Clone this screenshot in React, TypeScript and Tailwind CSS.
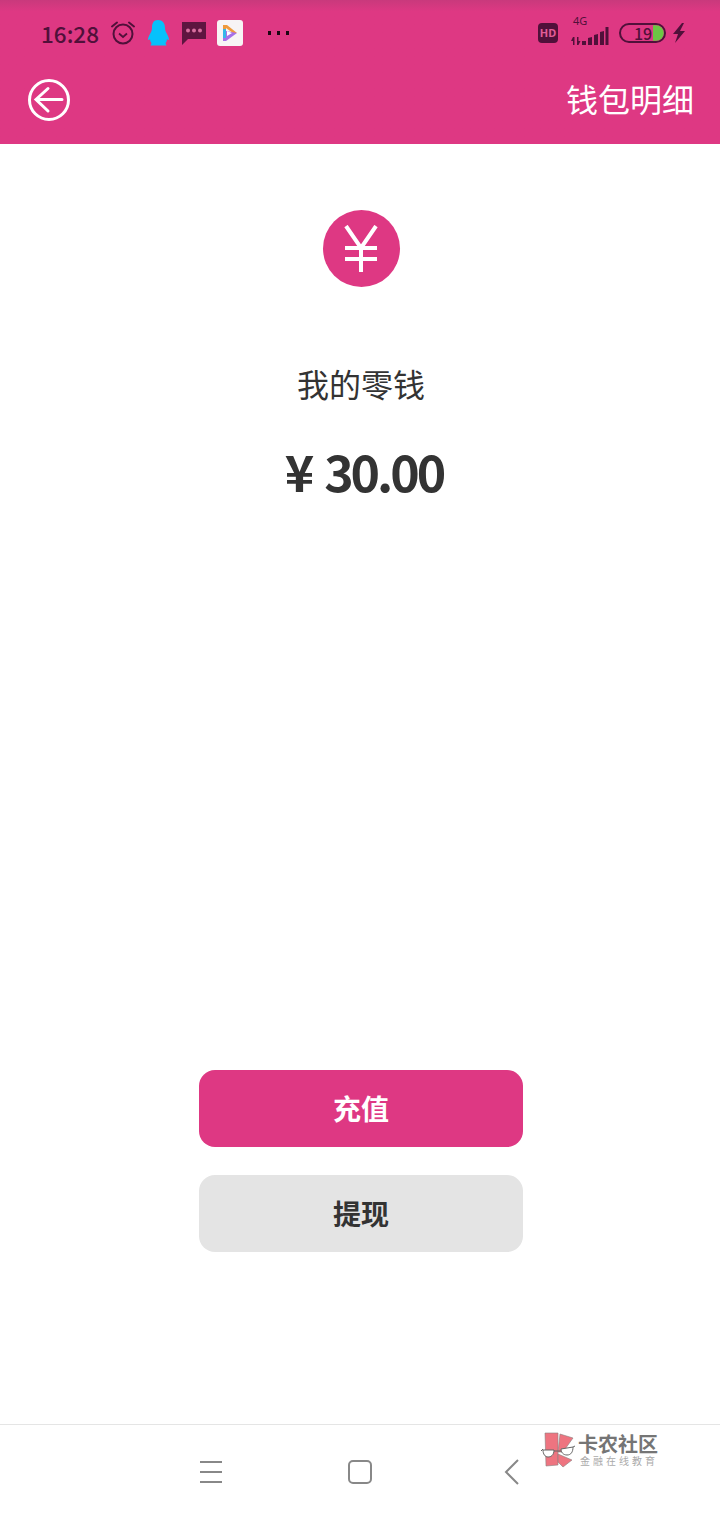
const font = { fontFamily: '"Noto Sans CJK SC", "Noto Sans", sans-serif' };

function Alarm() {
  return (
    <svg width="26" height="26" viewBox="0 0 26 26" fill="none" stroke="#50103a" strokeWidth="2">
      <circle cx="13" cy="14" r="9.500" />
      <path d="M9 13.500l4 3.500 4-3.500" strokeWidth="1.800" />
      <path d="M2 6.500L7 2.500M24 6.500L19 2.500" strokeLinecap="round" />
    </svg>
  );
}
function Penguin() {
  return (
    <svg width="24" height="26" viewBox="0 0 24 26" fill="#07c1fb">
      <path d="M12 0c4.600 0 7 3.500 7 8 0 2 .5 3 1.500 5 1.500 3 2.500 5 2.500 6.500 0 1-1 .5-2-.5 0 1.500-.5 3-1.500 4l1 2.500H4.500l1-2.500c-1-1-1.500-2.500-1.500-4-1 1-2 1.500-2 .5C2 18 3 16 4.500 13c1-2 1.500-3 1.500-5 0-4.500 1.400-8 6-8z" />
    </svg>
  );
}
function Msg() {
  return (
    <svg width="25" height="25" viewBox="0 0 25 25">
      <path d="M1 1h24v17H7l-6 6z" fill="#5e1540" />
      <circle cx="7" cy="9.500" r="2" fill="#d7709f" />
      <circle cx="13" cy="9.500" r="2" fill="#d7709f" />
      <circle cx="19" cy="9.500" r="2" fill="#d7709f" />
    </svg>
  );
}
function Play() {
  return (
    <div className="w-[26px] h-[26px] rounded-[3px] bg-[#f7f4f5] flex items-center justify-center">
      <svg width="20" height="20" viewBox="0 0 20 20" fill="none">
        <path d="M3 2h4l10 8-4 0L6 5v2H3z" fill="#ef9a3d" />
        <path d="M6 8l11 2-11 8H3l0-4 3 0z" fill="#a66fe8" />
        <path d="M3 6h3v9H3z" fill="#35b6e9" />
        <path d="M7 8l5 2-5 3z" fill="#ffffff" />
      </svg>
    </div>
  );
}
function Signal() {
  return (
    <div className="relative w-[38px] h-[26px]">
      <span className="absolute left-[2px] top-[-5px] text-[11px] leading-[12px] text-[#50103a]" style={{ fontFamily: '"Noto Sans", sans-serif' }}>4G</span>
      <svg className="absolute left-0 bottom-0" width="38" height="20" viewBox="0 0 38 20" fill="#50103a">
        <path d="M2 11h1.500v8H2zM0 15l2-4v4zM6 11h1.500v8H6zM7.500 19v-4l2 0z" />
        <rect x="11" y="15" width="4" height="4" />
        <path d="M17 12l4-1v8h-4zM23 9l4-1v11h-4zM29 6l4-1v14h-4zM34.500 1H37.500V19H34.500z" />
      </svg>
    </div>
  );
}
function Battery() {
  return (
    <div className="relative w-[47px] h-[20px] rounded-[10px] border-2 border-[#50103a] flex items-center">
      <span className="ml-[13px] text-[16px] leading-[18px] font-medium text-[#50103a]" style={{ fontFamily: '"Noto Sans CJK SC", sans-serif' }}>19</span>
      <svg className="ml-[1px]" width="11" height="16" viewBox="0 0 11 16">
        <path d="M0 0h3a8 8 0 0 1 0 16H0z" fill="#6cc644" />
      </svg>
    </div>
  );
}

export default function App() {
  return (
    <div className="w-[720px] h-[1520px] bg-white flex flex-col overflow-hidden relative" style={font}>
      <header className="h-[144px] bg-gradient-to-b from-[#c9397c] from-0% to-[#de3883] to-[8%] flex flex-col">
        <div className="h-[66px] flex items-center pl-[41px] pr-[33px]">
          <span className="text-[22.500px] leading-none text-[#50103a] w-[58px] font-medium whitespace-nowrap" style={{ fontFamily: '"Noto Sans CJK SC", sans-serif' }}>16:28</span>
          <div className="ml-[11px]"><Alarm /></div>
          <div className="ml-[10px]"><Penguin /></div>
          <div className="ml-[11px]"><Msg /></div>
          <div className="ml-[11px]"><Play /></div>
          <div className="ml-[25px] flex gap-[6px]">
            <span className="w-[3px] h-[4px] bg-[#1b0612]" />
            <span className="w-[3px] h-[4px] bg-[#1b0612]" />
            <span className="w-[3px] h-[4px] bg-[#1b0612]" />
          </div>
          <div className="flex-1" />
          <div className="w-[20px] h-[20px] rounded-[4px] bg-[#50103a] flex items-center justify-center text-[11px] font-bold text-[#e05d97]" style={{ fontFamily: '"Noto Sans", sans-serif' }}>HD</div>
          <div className="ml-[13px]"><Signal /></div>
          <div className="ml-[10px]"><Battery /></div>
          <svg className="ml-[6px]" width="15" height="20" viewBox="0 0 15 20" fill="#50103a">
            <path d="M10 0L1 11h5l-3 9 10-12H8l4-8z" />
          </svg>
        </div>
        <div className="flex-1 flex items-center justify-between pl-[28px] pr-[26px] pb-[11px]">
          <svg width="42" height="42" viewBox="0 0 42 42" fill="none" stroke="#ffffff" strokeWidth="3" strokeLinecap="round">
            <circle cx="21" cy="21" r="19.500" />
            <path d="M34 20.500H9M20 9.500L8 20.500 20 32" />
          </svg>
          <span className="text-[32px] leading-none text-white mt-[-3px]">钱包明细</span>
        </div>
      </header>

      <main className="flex-1 flex flex-col items-center relative pl-[2px]">
        <div className="mt-[66px] w-[77px] h-[77px] rounded-full bg-[#de3883] flex items-center justify-center">
          <svg width="36" height="48" viewBox="0 0 36 48" fill="none" stroke="#ffffff" strokeWidth="4">
            <path d="M3 1L18 23 33 1M18 23V47M2 23H34M2 34H34" />
          </svg>
        </div>
        <div className="mt-[76px] text-[32px] leading-[40px] text-[#333333]">我的零钱</div>
        <div className="mt-[35px] ml-[6px] text-[50px] leading-[64px] font-bold tracking-[-3px] text-[#333333] flex items-center" style={{ fontFamily: '"Noto Sans CJK SC", sans-serif' }}>
          <span className="mr-[10px] tracking-normal text-[50px]">¥</span>30.00
        </div>
        <div className="flex-1" />
        <button className="w-[324px] h-[77px] rounded-[16px] bg-[#de3883] text-white text-[28px] font-bold pb-[2px]">充值</button>
        <button className="mt-[28px] mb-[172px] w-[324px] h-[77px] rounded-[16px] bg-[#e4e4e4] text-[#333333] text-[28px] font-bold pb-[2px]">提现</button>
      </main>

      <nav className="h-[96px] border-t border-[#e5e5e5] flex items-center relative">
        <div className="ml-[200px] mt-[-2px] w-[22px] flex flex-col gap-[8px]">
          <span className="h-[2px] bg-[#888888]" />
          <span className="h-[2px] bg-[#888888]" />
          <span className="h-[2px] bg-[#888888]" />
        </div>
        <div className="ml-[126px] mt-[-2px] w-[24px] h-[24px] rounded-[5px] border-[2.500px] border-[#888888]" />
        <svg className="ml-[132px] mt-[-2px]" width="16" height="26" viewBox="0 0 16 26" fill="none" stroke="#888888" strokeWidth="2">
          <path d="M14 1L2 13l12 12" />
        </svg>
        <div className="absolute left-[540px] top-[7px] flex items-start">
          <svg width="36" height="37" viewBox="0 0 36 37">
            <path d="M5 1H18V33L6 34z" fill="#ee7480" stroke="#8a7f80" strokeWidth="0.600" />
            <path d="M20 2L33 6 23 20H18z" fill="#ee7480" stroke="#8a7f80" strokeWidth="0.600" />
            <path d="M18 22L32 28 23 35 18 30z" fill="#ee7480" stroke="#8a7f80" strokeWidth="0.600" />
            <path d="M1 19L3 17M13 19H21M33 15L35 14" fill="none" stroke="#666666" strokeWidth="1" />
            <path d="M3 18H14C14 23 11 25 8 25 5 25 3 22 3 18z" fill="#ffffff" stroke="#666666" strokeWidth="1" />
            <path d="M21 17L33 15C33 20 31 23 27 23 23 23 21 20 21 17z" fill="#ffffff" stroke="#666666" strokeWidth="1" />
          </svg>
          <div className="flex flex-col items-start ml-[2px] mt-[2px]">
            <span className="text-[20px] leading-[19px] font-bold text-[#757575] whitespace-nowrap">卡农社区</span>
            <span className="ml-[2px] mt-[1px] text-[10px] leading-[14px] text-[#aaaaaa] tracking-[3px] whitespace-nowrap">金融在线教育</span>
          </div>
        </div>
      </nav>
    </div>
  );
}
